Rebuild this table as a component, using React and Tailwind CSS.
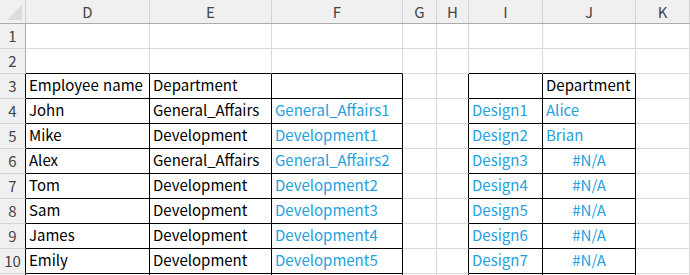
import React from "react";

const cols = ["D", "E", "F", "G", "H", "I", "J", "K"];
const widths = ["w-[124px]", "w-[122px]", "w-[131px]", "w-[34px]", "w-[32px]", "w-[74px]", "w-[93px]", "flex-1"];

const data = {
  3: { D: ["Employee name", "k"], E: ["Department", "k"], F: ["", "k"], I: ["", "k"], J: ["Department", "k"] },
  4: { D: ["John", "k"], E: ["General_Affairs", "k"], F: ["General_Affairs1", "b"], I: ["Design1", "b"], J: ["Alice", "b"] },
  5: { D: ["Mike", "k"], E: ["Development", "k"], F: ["Development1", "b"], I: ["Design2", "b"], J: ["Brian", "b"] },
  6: { D: ["Alex", "k"], E: ["General_Affairs", "k"], F: ["General_Affairs2", "b"], I: ["Design3", "b"], J: ["#N/A", "c"] },
  7: { D: ["Tom", "k"], E: ["Development", "k"], F: ["Development2", "b"], I: ["Design4", "b"], J: ["#N/A", "c"] },
  8: { D: ["Sam", "k"], E: ["Development", "k"], F: ["Development3", "b"], I: ["Design5", "b"], J: ["#N/A", "c"] },
  9: { D: ["James", "k"], E: ["Development", "k"], F: ["Development4", "b"], I: ["Design6", "b"], J: ["#N/A", "c"] },
  10: { D: ["Emily", "k"], E: ["Development", "k"], F: ["Development5", "b"], I: ["Design7", "b"], J: ["#N/A", "c"] },
  11: { D: ["", "k"], E: ["", "k"], F: ["", "k"], I: ["", "k"], J: ["", "k"] },
};

const inTable = (r, c) => {
  if (r < 3 || r > 11) return false;
  return ["D", "E", "F", "I", "J"].includes(c);
};

function Cell({ r, ci }) {
  const c = cols[ci];
  const next = cols[ci + 1];
  const blackRight = inTable(r, c) || (next && inTable(r, next));
  const blackBottom = inTable(r, c) || inTable(r + 1, c);
  const cell = data[r] && data[r][c];
  const text = cell ? cell[0] : "";
  const kind = cell ? cell[1] : "k";
  return (
    <div
      className={[
        "h-full shrink-0 border-r border-b flex items-end pb-[3px] px-[3px] whitespace-nowrap overflow-visible [word-spacing:1px]",
        widths[ci],
        blackRight ? "border-r-black" : "border-r-[#dadada]",
        blackBottom ? "border-b-black" : "border-b-[#dadada]",
        kind === "b" ? "text-[#24a1de]" : kind === "c" ? "text-[#24a1de] justify-center" : "text-black",
      ].join(" ")}
    >
      {text}
    </div>
  );
}

export default function App() {
  const rows = [1, 2, 3, 4, 5, 6, 7, 8, 9, 10, 11];
  return (
    <div
      className="w-[690px] h-[275px] overflow-hidden bg-white text-[15px] leading-[20px]"
      style={{ fontFamily: '"Noto Sans CJK JP", "Noto Sans", sans-serif' }}
    >
      <div className="flex h-[24px] bg-[#f0f0f0] border-b border-b-[#ababab]">
        <div className="w-[26px] shrink-0 h-full border-r border-r-[#d0d0d0] relative">
          <svg className="absolute right-[3px] bottom-[3px]" width="15" height="15" viewBox="0 0 15 15">
            <polygon points="15,0 15,15 0,15" fill="#dcdcdc" />
          </svg>
        </div>
        {cols.map((c, i) => (
          <div
            key={c}
            className={[
              "h-full shrink-0 border-r border-r-[#d4d4d4] flex items-center justify-center text-[#444] text-[15px]",
              widths[i],
            ].join(" ")}
          >
            {c}
          </div>
        ))}
      </div>
      {rows.map((r) => (
        <div key={r} className="flex h-[25px]">
          <div
            className={[
              "w-[26px] shrink-0 h-full bg-[#f0f0f0] border-b border-b-[#d4d4d4] border-r flex items-center justify-center text-[#444]",
              r >= 3 ? "border-r-black" : "border-r-[#ababab]",
            ].join(" ")}
          >
            {r <= 10 ? r : ""}
          </div>
          {cols.map((c, ci) => (
            <Cell key={c} r={r} ci={ci} />
          ))}
        </div>
      ))}
    </div>
  );
}
